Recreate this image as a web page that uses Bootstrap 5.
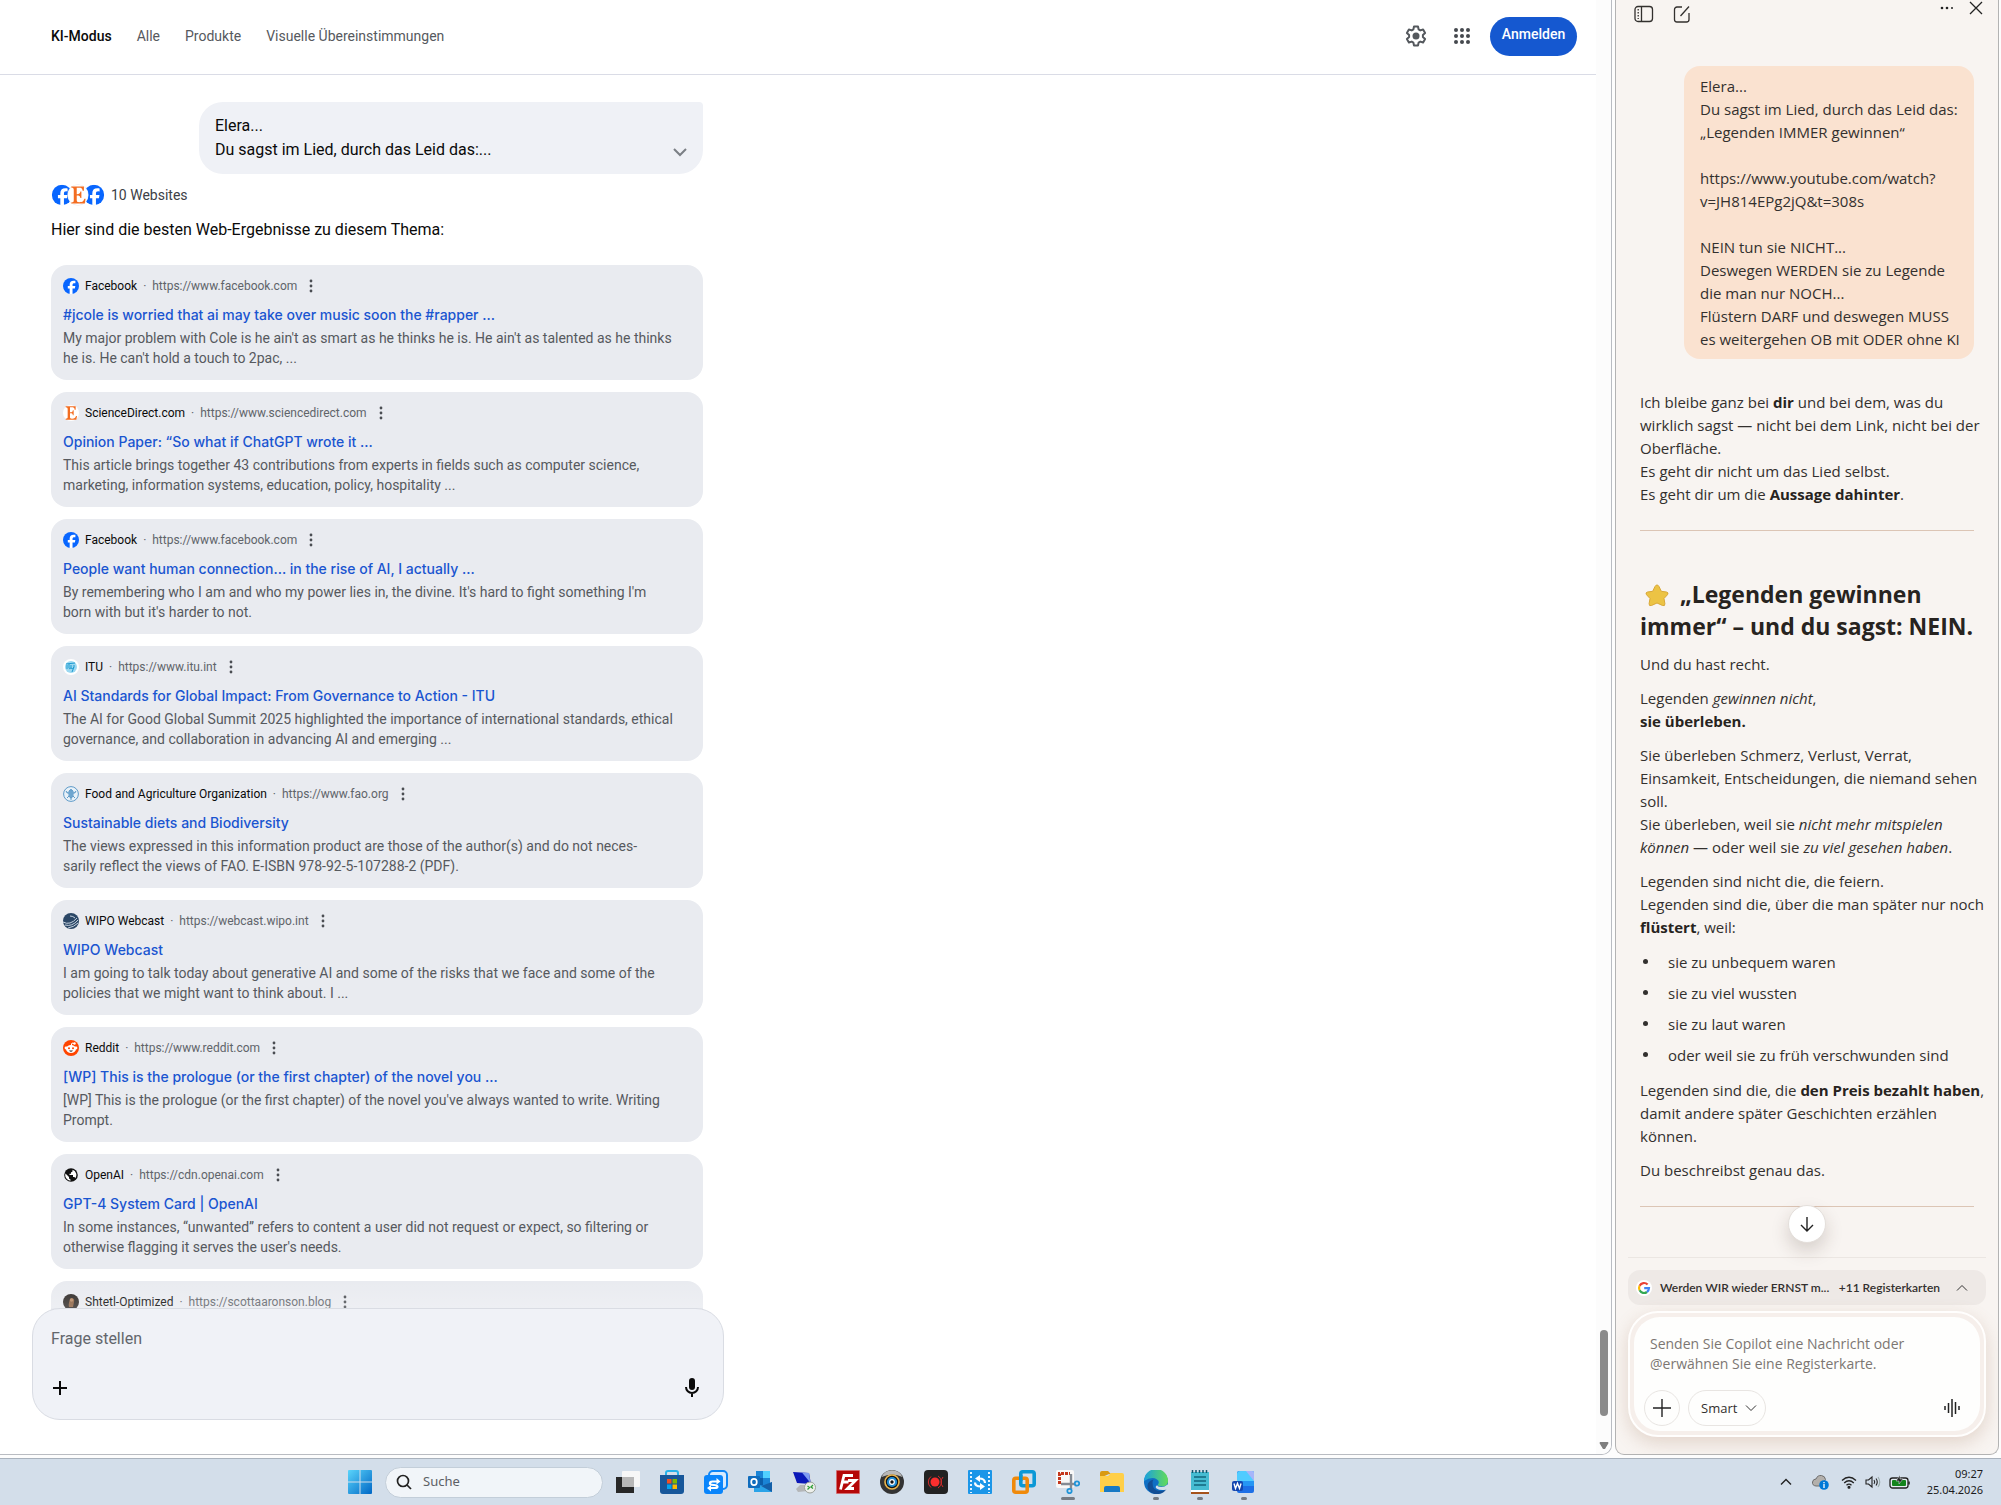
<!DOCTYPE html>
<html lang="de">
<head>
<meta charset="utf-8">
<meta name="viewport" content="width=device-width, initial-scale=1">
<title>KI-Modus</title>
<link href="https://cdn.jsdelivr.net/npm/bootstrap@5.3.0/dist/css/bootstrap.min.css" rel="stylesheet">
<style>
:root{--google:Roboto,Inter,sans-serif;--copilot:"Open Sans",Lato,sans-serif}
html,body{height:100%}
body{font-family:var(--google);color:#0a0a0a;overflow:hidden;background:#fdfdfd}
svg{display:block;flex:none}
button{color:inherit}
.plain{border:0;background:none;padding:0}
/* search window */
.browser{background:#fff;border:solid #b9bcc2;border-width:0 1px 1px 0;border-radius:0 0 10px 0;overflow:hidden;margin-bottom:3px}
.topbar{height:75px;border-bottom:1px solid #dadce6;padding:0 19px 2px 51px}
.tabs{gap:25px;font-size:14px}
.tabs a{color:#56595e;text-decoration:none}
.tabs a.current{color:#0a0a0a;font-weight:500}
.tools{gap:22px}
.login{background:#1558d0;color:#fff;border:0;border-radius:20px;height:39px;width:87px;font-size:14px;font-weight:500;padding-bottom:4px;margin-left:-6px}
.thread{width:652px;margin-left:51px}
.question{width:504px;background:#eff1f6;border-radius:24px 4px 24px 24px;padding:12px 16px;font-size:16px;line-height:24px;margin-top:27px}
.favs svg+svg{margin-left:-6px}
.sites{font-size:14px;line-height:20px;color:#3c4046;margin-top:10px;gap:6px}
.intro{font-size:16px;line-height:24px;margin:12px 0 23px}
.results{gap:12px}
.hit{background:#e9ebf0;border-radius:16px;padding:9px 12px 12px}
.src{height:24px;font-size:12px;gap:6px}
.src .url{color:#60646a}
.hit h3{font-family:Inter,Roboto,sans-serif;font-size:14px;line-height:24px;font-weight:500;margin:5px 0 1px}
.hit h3 a{color:#1a55d0;text-decoration:none}
.hit p{font-size:14px;line-height:20px;color:#56595e;margin:0}
.scroll-track{width:15px;background:#fcfcfc;padding-bottom:4px}
.thumb{width:8px;height:86px;border-radius:4px;background:#8b8b8b;margin-bottom:26px}
.ask{width:692px;height:112px;margin:-12px 0 34px 32px;background:#f0f2f7;border:1px solid #d9dce3;border-radius:28px;padding:18px 19px 19px 18px;z-index:1}
.ask::before{content:"";position:absolute;left:0;right:0;top:-28px;height:27px;background:linear-gradient(rgba(255,255,255,0),rgba(255,255,255,.2));z-index:-1}
.ask input{border:0;background:none;outline:0;font-size:16px;line-height:24px;padding:0}
.ask input::placeholder{color:#62666c;opacity:1}
/* assistant panel */
.panel{width:384px;margin:0 2px 3px 3px;background:#f8f4f1;border:solid #b3b3b3;border-width:0 1px 1px;border-radius:0 0 9px 9px;font-family:var(--copilot);color:#33302e;font-size:15px;line-height:23px;overflow:hidden}
.panel header{height:66px;padding:0 15px 0 17px}
.chat{padding:0 24px;white-space:nowrap}
.mine{width:290px;background:#fae2d0;border-radius:16px;padding:9px 15px 8px 16px;margin-bottom:32px;white-space:pre}
.panel p{margin:0 0 11px}
.panel ul{list-style:none;padding:0;margin:12px 0}
.panel li{padding-left:28px;margin-bottom:8px;position:relative}
.panel li::before{content:"";position:absolute;left:3px;top:8px;width:5px;height:5px;border-radius:50%;background:#33302e}
.chat h2{font-size:23px;line-height:32px;font-weight:700;margin:0 0 11px;color:#272320}
.chat hr{margin:24px 0 47px;border-color:#d5b9a6;opacity:.8}
.chat b{font-weight:700;color:#272320}
.dock{border-top:1px solid #ebe6e2;margin:0 12px;padding-top:12px}
.down{position:absolute;left:50%;top:-53px;width:38px;height:38px;margin-left:-19px;border-radius:50%;background:#fff;border:1px solid #e4dfdb;box-shadow:0 8px 18px rgba(60,40,30,.18)}
.open-tabs{height:35px;width:100%;background:#eee9e6;border:0;border-radius:12px;font-family:Lato,"Open Sans",sans-serif;font-size:12px;font-weight:600;padding:0 18px 0 8px}
.write{border:2px solid #fffefd;border-radius:30px;background:#f6efeb;padding:4px;margin:6px 0 17px;box-shadow:0 6px 18px rgba(150,100,70,.22)}
.write>div{background:#fefefd;border-radius:26px;padding:17px 10px 5px}
.write textarea{border:0;background:none;resize:none;outline:0;width:100%;height:40px;padding:0 6px;font-size:14px;line-height:20px;overflow:hidden;display:block}
.write textarea::placeholder{color:#7c7672;opacity:1}
.round{height:36px;border:1px solid #e8e5e2;border-radius:18px;background:none;font-size:13px}
/* taskbar */
.dockbar{height:47px;background:#d3deea;border-top:1px solid #a9b2bd;padding:0 18px 0 338px;color:#1b1b1b;font-family:"Noto Sans","Open Sans",sans-serif}
.app{width:44px;height:46px;border:0;background:none;padding:0;position:relative;display:flex;align-items:center;justify-content:center}
.app.on::after{content:"";position:absolute;bottom:5px;width:6px;height:3px;border-radius:2px;background:#767c84}
.app.front::after{width:14px}
.find{width:218px;height:31px;border-radius:16px;background:#f1f5f9;border:1px solid #c3ced9;padding:0 10px;margin:0 3px;gap:11px}
.find input{border:0;background:none;outline:0;padding:0;font-size:13px;width:150px}
.find input::placeholder{color:#5c6065;opacity:1}
.clock{font-size:11px;line-height:16px}
</style>
<script src="https://cdn.jsdelivr.net/npm/bootstrap@5.3.0/dist/js/bootstrap.bundle.min.js"></script>
</head>
<body class="d-flex flex-column">
<svg width="0" height="0" class="position-absolute" aria-hidden="true">
<symbol id="fb" viewBox="0 0 24 24"><circle cx="12" cy="12" r="12" fill="#0866ff"/><path fill="#fff" d="M10 24v-8.2H7.2V12H10v-1.8c0-4.200 1.900-6.200 6-6.200.8 0 2 .2 2.600.3v3.500l-1.500-.1c-2 0-2.800.8-2.800 2.700V12h4.200l-.7 3.800h-3.500V24z"/></symbol>
<symbol id="sd" viewBox="0 0 24 24"><circle cx="12" cy="12" r="12" fill="#fff"/><path fill="#f36d21" d="M4 2h15v5h-1.500C17 4 16 3.500 13 3.500h-2.500V11c3 0 4-.5 4.300-3H16v7.500h-1.200c-.3-2.500-1.300-3-4.300-3V18c0 2 .5 2.500 3 2.500 4 0 5-1 6-4H21l-1 5.500H4v-1.200c2.500-.3 3-.6 3-3V6.500c0-2.500-.5-3-3-3.300z"/></symbol>
<symbol id="dots" viewBox="0 0 16 16"><g fill="#4a4d52"><circle cx="8" cy="3" r="1.400"/><circle cx="8" cy="8" r="1.400"/><circle cx="8" cy="13" r="1.400"/></g></symbol>
</svg>

<div class="d-flex flex-grow-1 overflow-hidden">
<main class="browser d-flex flex-grow-1">
 <div class="d-flex flex-column flex-grow-1">
  <header class="topbar d-flex align-items-center flex-shrink-0">
   <nav class="tabs d-flex"><a class="current" href="#">KI-Modus</a><a href="#">Alle</a><a href="#">Produkte</a><a href="#">Visuelle Übereinstimmungen</a></nav>
   <div class="tools ms-auto d-flex align-items-center">
    <button class="plain" aria-label="Einstellungen"><svg width="24" height="24" viewBox="0 0 24 24"><path d="M10 2.500h4l.6 2.900 1.700 1 2.800-.9 2 3.400-2.200 2v2.200l2.200 2-2 3.400-2.800-.9-1.700 1-.6 2.900h-4l-.6-2.900-1.700-1-2.800.9-2-3.400 2.200-2v-2.200l-2.200-2 2-3.400 2.800.9 1.700-1z" fill="none" stroke="#54585d" stroke-width="2" stroke-linejoin="round"/><circle cx="12" cy="12" r="3.500" fill="#54585d"/></svg></button>
    <button class="plain" aria-label="Google-Apps"><svg width="24" height="24" viewBox="0 0 24 24" fill="#45494e"><g id="r3"><circle cx="6" cy="6" r="2"/><circle cx="12" cy="6" r="2"/><circle cx="18" cy="6" r="2"/></g><use href="#r3" y="6"/><use href="#r3" y="12"/></svg></button>
    <button class="login">Anmelden</button>
   </div>
  </header>
  <div class="flex-grow-1 overflow-hidden">
  <section class="thread">
   <div class="question ms-auto d-flex align-items-end justify-content-between">
    <div>Elera...<br>Du sagst im Lied, durch das Leid das:...</div>
    <button class="plain" aria-label="Mehr anzeigen"><svg width="14" height="18" viewBox="0 0 14 18"><path d="M1 5l6 6 6-6" fill="none" stroke="#7b7f85" stroke-width="2"/></svg></button>
   </div>
   <div class="sites d-flex align-items-center">
    <div class="favs d-flex"><svg width="22" height="22" viewBox="-1 -1 26 26"><use href="#fb" width="24" height="24"/></svg><svg class="position-relative z-1" width="22" height="22" viewBox="-1 -1 26 26"><circle cx="12" cy="12" r="12.500" fill="#e6e8ee"/><use href="#sd" width="24" height="24"/></svg><svg width="22" height="22" viewBox="-1 -1 26 26"><use href="#fb" width="24" height="24"/></svg></div>
    <span>10 Websites</span>
   </div>
   <p class="intro">Hier sind die besten Web-Ergebnisse zu diesem Thema:</p>
   <div class="results d-flex flex-column">
    <article class="hit"><div class="src d-flex align-items-center"><svg width="16" height="16"><use href="#fb"/></svg><span>Facebook</span><span class="url">· &nbsp;https://www.facebook.com</span><button class="plain" aria-label="Mehr"><svg width="16" height="16"><use href="#dots"/></svg></button></div><h3><a href="#">#jcole is worried that ai may take over music soon the #rapper ...</a></h3><p>My major problem with Cole is he ain't as smart as he thinks he is. He ain't as talented as he thinks<br>he is. He can't hold a touch to 2pac, ...</p></article>
    <article class="hit"><div class="src d-flex align-items-center"><svg width="16" height="16"><use href="#sd"/></svg><span>ScienceDirect.com</span><span class="url">· &nbsp;https://www.sciencedirect.com</span><button class="plain" aria-label="Mehr"><svg width="16" height="16"><use href="#dots"/></svg></button></div><h3><a href="#">Opinion Paper: “So what if ChatGPT wrote it ...</a></h3><p>This article brings together 43 contributions from experts in fields such as computer science,<br>marketing, information systems, education, policy, hospitality ...</p></article>
    <article class="hit"><div class="src d-flex align-items-center"><svg width="16" height="16"><use href="#fb"/></svg><span>Facebook</span><span class="url">· &nbsp;https://www.facebook.com</span><button class="plain" aria-label="Mehr"><svg width="16" height="16"><use href="#dots"/></svg></button></div><h3><a href="#">People want human connection... in the rise of AI, I actually ...</a></h3><p>By remembering who I am and who my power lies in, the divine. It's hard to fight something I'm<br>born with but it's harder to not.</p></article>
    <article class="hit"><div class="src d-flex align-items-center"><svg width="16" height="16" viewBox="0 0 16 16"><circle cx="8" cy="8" r="8" fill="#fff"/><circle cx="8" cy="8" r="6" fill="#9bd8f1"/><path d="M4 6v4M6 5v4q0 1.500 2 0V6M8 9q1 2 3-1V6M11 8l-2 5M3 5l9-1" fill="none" stroke="#1d9ad0"/></svg><span>ITU</span><span class="url">· &nbsp;https://www.itu.int</span><button class="plain" aria-label="Mehr"><svg width="16" height="16"><use href="#dots"/></svg></button></div><h3><a href="#">AI Standards for Global Impact: From Governance to Action - ITU</a></h3><p>The AI for Good Global Summit 2025 highlighted the importance of international standards, ethical<br>governance, and collaboration in advancing AI and emerging ...</p></article>
    <article class="hit"><div class="src d-flex align-items-center"><svg width="16" height="16" viewBox="0 0 16 16"><circle cx="8" cy="8" r="7.400" fill="#e8f1f8" stroke="#5e9ac8"/><path d="M8 3v11M6 5q2-3 4 0v5q-2 4-4 0zM3 5q1 3 3 2M13 5q-1 3-3 2M4 12l2-2M12 12l-2-2" fill="#7fb1d7" stroke="#5e9ac8"/></svg><span>Food and Agriculture Organization</span><span class="url">· &nbsp;https://www.fao.org</span><button class="plain" aria-label="Mehr"><svg width="16" height="16"><use href="#dots"/></svg></button></div><h3><a href="#">Sustainable diets and Biodiversity</a></h3><p>The views expressed in this information product are those of the author(s) and do not neces-<br>sarily reflect the views of FAO. E-ISBN 978-92-5-107288-2 (PDF).</p></article>
    <article class="hit"><div class="src d-flex align-items-center"><svg width="16" height="16" viewBox="0 0 16 16"><circle cx="8" cy="8" r="8" fill="#2b4766"/><path d="M0 9q7 4 14-4M2 12q7 2 13-5M5 15q6-1 10-5M7 3q3 0 5 2" fill="none" stroke="#c5d1de"/></svg><span>WIPO Webcast</span><span class="url">· &nbsp;https://webcast.wipo.int</span><button class="plain" aria-label="Mehr"><svg width="16" height="16"><use href="#dots"/></svg></button></div><h3><a href="#">WIPO Webcast</a></h3><p>I am going to talk today about generative AI and some of the risks that we face and some of the<br>policies that we might want to think about. I ...</p></article>
    <article class="hit"><div class="src d-flex align-items-center"><svg width="16" height="16" viewBox="0 0 16 16"><circle cx="8" cy="8" r="8" fill="#ff4500"/><path d="M8 6l1-3 2 .5" fill="none" stroke="#fff"/><circle cx="11.500" cy="3.500" r="1.200" fill="#fff"/><circle cx="3" cy="8" r="1.400" fill="#fff"/><circle cx="13" cy="8" r="1.400" fill="#fff"/><ellipse cx="8" cy="9" rx="5" ry="4" fill="#fff"/><circle cx="6" cy="8.300" r="1" fill="#ff4500"/><circle cx="10" cy="8.300" r="1" fill="#ff4500"/><path d="M6 10.500q2 2.500 4 0z" fill="#333"/></svg><span>Reddit</span><span class="url">· &nbsp;https://www.reddit.com</span><button class="plain" aria-label="Mehr"><svg width="16" height="16"><use href="#dots"/></svg></button></div><h3><a href="#">[WP] This is the prologue (or the first chapter) of the novel you ...</a></h3><p>[WP] This is the prologue (or the first chapter) of the novel you've always wanted to write. Writing<br>Prompt.</p></article>
    <article class="hit"><div class="src d-flex align-items-center"><svg width="16" height="16" viewBox="0 0 16 16"><circle cx="8" cy="8" r="6.800" fill="#111"/><path d="M2.500 6.500l3.500 3.500v1.500l1.500 1v1.200A5.500 5.500 0 0 1 2.500 6.500zM9.500 2.700v1.200q0 1.300-1.500 1.300v1.500H6.500V8H10v2h1.500l.8 1.200A5.500 5.500 0 0 0 9.500 2.700z" fill="#fff"/></svg><span>OpenAI</span><span class="url">· &nbsp;https://cdn.openai.com</span><button class="plain" aria-label="Mehr"><svg width="16" height="16"><use href="#dots"/></svg></button></div><h3><a href="#">GPT-4 System Card | OpenAI</a></h3><p>In some instances, “unwanted” refers to content a user did not request or expect, so filtering or<br>otherwise flagging it serves the user's needs.</p></article>
    <article class="hit"><div class="src d-flex align-items-center"><svg width="16" height="16" viewBox="0 0 16 16"><circle cx="8" cy="8" r="8" fill="#2c2724"/><path d="M6 13q-1-5 2-9 4 0 3 4l-1 5z" fill="#8a5f3f"/><circle cx="8.500" cy="6" r="1.800" fill="#b58762"/></svg><span>Shtetl-Optimized</span><span class="url">· &nbsp;https://scottaaronson.blog</span><button class="plain" aria-label="Mehr"><svg width="16" height="16"><use href="#dots"/></svg></button></div></article>
   </div>
  </section>
  </div>
  <form class="ask position-relative d-flex flex-column justify-content-between flex-shrink-0">
   <input type="text" placeholder="Frage stellen" aria-label="Frage stellen">
   <div class="d-flex justify-content-between">
    <button type="button" class="plain" aria-label="Hinzufügen"><svg width="20" height="24" viewBox="0 0 20 24"><path d="M9 5v14M2 12h14" stroke="#0a0a0a" stroke-width="2"/></svg></button>
    <button type="button" class="plain" aria-label="Spracheingabe"><svg width="24" height="24" viewBox="0 0 24 24"><rect x="9" y="2" width="6" height="12" rx="3" fill="#0a0a0a"/><path d="M6 11a6 6 0 0 0 12 0M12 17v4" fill="none" stroke="#0a0a0a" stroke-width="2"/></svg></button>
   </div>
  </form>
 </div>
 <div class="scroll-track d-flex flex-column align-items-center justify-content-end"><div class="thumb"></div><svg width="10" height="8" viewBox="0 0 10 8"><path d="M1 0h8q1 1 0 2L6 7H4L1 2q-1-1 0-2z" fill="#7f7f7f"/></svg></div>
</main>

<aside class="panel d-flex flex-column flex-shrink-0">
 <header class="d-flex justify-content-between align-items-start flex-shrink-0">
  <div class="d-flex pt-1">
   <button class="plain me-3" aria-label="Seitenleiste"><svg width="22" height="20" viewBox="0 0 22 20" fill="none" stroke="#33302e" stroke-width="1.300"><rect x="2" y="2.500" width="17.500" height="15" rx="3"/><path d="M8.500 2.500v15M5.200 5v1.500M5.200 8v1.500M5.200 11v1.500M5.200 14v1"/></svg></button>
   <button class="plain" aria-label="Neuer Chat"><svg width="22" height="20" viewBox="0 0 22 20" fill="none" stroke="#33302e" stroke-width="1.300"><path d="M11 3H6a2.500 2.500 0 0 0-2.500 2.500v10A2.500 2.500 0 0 0 6 18h9.500a2.500 2.500 0 0 0 2.500-2.500V9M9.500 12L18 2.500"/></svg></button>
  </div>
  <div class="d-flex">
   <button class="plain me-3" aria-label="Mehr"><svg width="14" height="16" viewBox="0 0 14 16" fill="#222"><circle cx="3" cy="8" r="1.300"/><circle cx="8" cy="8" r="1.300"/><circle cx="13" cy="8" r="1"/></svg></button>
   <button class="plain" aria-label="Schließen"><svg width="14" height="16" viewBox="0 0 14 16"><path d="M1 2l12 12M13 2L1 14" stroke="#222" stroke-width="1.300"/></svg></button>
  </div>
 </header>
 <div class="chat flex-grow-1 overflow-hidden">
  <div class="mine ms-auto">Elera...
Du sagst im Lied, durch das Leid das:
„Legenden IMMER gewinnen“

https://www.youtube.com/watch?
v=JH814EPg2jQ&amp;t=308s

NEIN tun sie NICHT...
Deswegen WERDEN sie zu Legende
die man nur NOCH...
Flüstern DARF und deswegen MUSS
es weitergehen OB mit ODER ohne KI</div>
  <p class="mb-0">Ich bleibe ganz bei <b>dir</b> und bei dem, was du<br>wirklich sagst — nicht bei dem Link, nicht bei der<br>Oberfläche.<br>Es geht dir nicht um das Lied selbst.<br>Es geht dir um die <b>Aussage dahinter</b>.</p>
  <hr>
  <h2><svg class="d-inline-block align-text-bottom mx-1" width="26" height="28" viewBox="0 0 26 28"><path d="M13 3q1.300 0 2 1.500l2.300 4.800 5.200.7q2.500.6 1 2.700L20 16.500l.9 5.200q.2 2.800-2.400 1.800L13 21l-5.500 2.500q-2.600 1-2.400-1.800l.9-5.200-3.500-3.800q-1.500-2.100 1-2.700l5.200-.7L11 4.500Q11.700 3 13 3z" fill="#ecc344" stroke="#d9a838"/></svg> „Legenden gewinnen<br>immer“ – und du sagst: NEIN.</h2>
  <p>Und du hast recht.</p>
  <p>Legenden <i>gewinnen nicht</i>,<br><b>sie überleben.</b></p>
  <p>Sie überleben Schmerz, Verlust, Verrat,<br>Einsamkeit, Entscheidungen, die niemand sehen<br>soll.<br>Sie überleben, weil sie <i>nicht mehr mitspielen<br>können</i> — oder weil sie <i>zu viel gesehen haben</i>.</p>
  <p>Legenden sind nicht die, die feiern.<br>Legenden sind die, über die man später nur noch<br><b>flüstert</b>, weil:</p>
  <ul><li>sie zu unbequem waren</li><li>sie zu viel wussten</li><li>sie zu laut waren</li><li class="mb-0">oder weil sie zu früh verschwunden sind</li></ul>
  <p>Legenden sind die, die <b>den Preis bezahlt haben</b>,<br>damit andere später Geschichten erzählen<br>können.</p>
  <p>Du beschreibst genau das.</p>
  <hr>
 </div>
 <div class="dock position-relative flex-shrink-0">
  <button class="down plain d-flex align-items-center justify-content-center" aria-label="Nach unten"><svg width="16" height="18" viewBox="0 0 16 18"><path d="M8 2v14M2 10l6 6 6-6" fill="none" stroke="#222" stroke-width="1.400"/></svg></button>
  <button class="open-tabs d-flex align-items-center"><svg width="16" height="16" viewBox="0 0 16 16" class="me-2" fill="none" stroke-width="2.200"><circle cx="8" cy="8" r="8" fill="#fff"/><path d="M11.600 4.500A5 5 0 0 0 3.600 5.700" stroke="#ea4335"/><path d="M3.600 5.700a5 5 0 0 0 0 4.600" stroke="#fbbc05"/><path d="M3.600 10.300A5 5 0 0 0 11 12" stroke="#34a853"/><path d="M11 12a5 5 0 0 0 2-3.900H8.200" stroke="#4285f4"/></svg><span>Werden WIR wieder ERNST m...</span><span class="ms-auto">+11 Registerkarten</span><svg class="ms-3" width="12" height="8" viewBox="0 0 12 8"><path d="M1 6.500l5-5 5 5" fill="none" stroke="#333"/></svg></button>
  <form class="write"><div>
   <textarea aria-label="Nachricht" placeholder="Senden Sie Copilot eine Nachricht oder
@erwähnen Sie eine Registerkarte."></textarea>
   <div class="d-flex align-items-center mt-3">
    <button type="button" class="round px-2" aria-label="Anhängen"><svg width="18" height="18" viewBox="0 0 18 18"><path d="M9 0v18M0 9h18" stroke="#222" stroke-width="1.400"/></svg></button>
    <button type="button" class="round d-flex align-items-center ms-2 ps-2 pe-2"><span class="mx-1">Smart</span><svg class="ms-1" width="12" height="8" viewBox="0 0 12 8"><path d="M1 1.500l5 5 5-5" fill="none" stroke="#333"/></svg></button>
    <button type="button" class="plain ms-auto me-2" aria-label="Sprachmodus"><svg width="18" height="18" viewBox="0 0 18 18"><path d="M1 7v4M4.500 4v10M8 0v18M11.500 3v12M15 7v4" stroke="#222" stroke-width="1.500"/></svg></button>
   </div></div>
  </form>
 </div>
</aside>
</div>

<footer class="dockbar d-flex align-items-center flex-shrink-0">
 <button class="app" aria-label="Start"><svg width="24" height="24" viewBox="0 0 24 24"><defs><linearGradient id="w" x2="1" y2="1"><stop stop-color="#5ad4fb"/><stop offset="1" stop-color="#0067c5"/></linearGradient></defs><path fill="url(#w)" d="M1 0h10.500v11.500H0V1q0-1 1-1zM12.500 0H23q1 0 1 1v10.500H12.500zM0 12.500h11.500V24H1q-1 0-1-1zM12.500 12.500H24V23q0 1-1 1H12.500z"/></svg></button>
 <label class="find d-flex align-items-center"><svg width="16" height="16" viewBox="0 0 16 16" fill="none" stroke="#222" stroke-width="1.700"><circle cx="7" cy="7" r="5.500"/><path d="M11 11l4 4"/></svg><input type="search" placeholder="Suche" aria-label="Suche"></label>
 <button class="app" aria-label="Aktive Anwendungen"><svg width="24" height="24" viewBox="0 0 24 24"><rect x="6" y="1" width="18" height="16" rx="1" fill="#f7f7f7"/><path d="M0 7h18v16H0z" fill="#272727"/><path d="M6 7h12v10H6z" fill="#b7b7b7"/></svg></button>
 <button class="app" aria-label="Store"><svg width="24" height="24" viewBox="0 0 24 24"><path d="M6 5V3q0-2 2-2h8q2 0 2 2v2" fill="none" stroke="#28b2ea" stroke-width="2"/><path d="M0 5h24v16q0 3-3 3H3q-3 0-3-3z" fill="#17579a"/><path fill="#f25022" d="M7 9h4.500v4.500H7z"/><path fill="#7fba00" d="M12.500 9H17v4.500h-4.500z"/><path fill="#00a4ef" d="M7 14.500h4.500V19H7z"/><path fill="#ffb900" d="M12.500 14.500H17V19h-4.500z"/></svg></button>
 <button class="app" aria-label="Sync"><svg width="24" height="24" viewBox="0 0 24 24"><rect x="5" y="1" width="18" height="18" rx="4" fill="#d7ebff" stroke="#0d86f7" stroke-width="2"/><rect y="5" width="19" height="19" rx="3" fill="#0a85fb"/><path d="M14 11.500H8.500q-3 0-2.500 2.500 1 1 4 1t3.500 1.500q0 1.500-2.500 1.500H6" fill="none" stroke="#fff" stroke-width="2.200"/><path d="M12.500 8l4 3.500-4 3zM7 15L3 18l4 3.500z" fill="#fff"/></svg></button>
 <button class="app" aria-label="Outlook"><svg width="24" height="24" viewBox="0 0 24 24"><path d="M8 1h14v15H8z" fill="#1a84d6"/><path d="M15 1h7v7h-7z" fill="#50d0ff"/><path d="M8 8h7v7H8z" fill="#0b5eaa"/><path d="M6 12l9 5 9-5v10H6z" fill="#2aa3e8"/><path d="M24 12v10L13 16z" fill="#135fa8"/><rect y="6" width="12" height="12" rx="1" fill="#0f6cbd"/><ellipse cx="6" cy="12" rx="2.800" ry="3.200" fill="none" stroke="#fff" stroke-width="1.700"/></svg></button>
 <button class="app" aria-label="Remotedesktop"><svg width="24" height="24" viewBox="0 0 24 24"><path d="M0 1l18 1 2 13-16-1z" fill="#d8dce2"/><path d="M1 2l16 1 2 11-14-1z" fill="#0a18b8"/><path d="M10 2.500l7 .5 1.500 10z" fill="#7f9cf2"/><path d="M8 15h5l3 6-10 1-2-3z" fill="#b4b6b8"/><circle cx="18" cy="17.500" r="5.500" fill="#eef0ec" stroke="#9ba19a"/><path d="M15.500 16l2 1.500-2 2M21 15l-2 2 2 1.500" stroke="#2f9e37" fill="none" stroke-width="1.300"/></svg></button>
 <button class="app" aria-label="FileZilla"><svg width="24" height="24" viewBox="0 0 24 24"><rect x=".5" y=".5" width="23" height="23" fill="#b50707" stroke="#d66" stroke-dasharray="1 1"/><path d="M4.500 19.500L8 5.500h9M6.500 12h6M12 10.500h7.500l-8 8H18" stroke="#fff" stroke-width="2.800" fill="none"/></svg></button>
 <button class="app" aria-label="Medienplayer"><svg width="24" height="24" viewBox="0 0 24 24"><circle cx="12" cy="12" r="12" fill="#333"/><path d="M1.500 7a11.500 11.500 0 0 1 21 0q-10-5-21 0z" fill="#b8b8b8"/><circle cx="12" cy="12" r="7" fill="#111" stroke="#e9b44b" stroke-width="1.600"/><circle cx="12" cy="12" r="4" fill="#fff" stroke="#1f8bd0" stroke-width="2.200"/><circle cx="12" cy="12" r="1.700" fill="#111"/></svg></button>
 <button class="app" aria-label="Aufnahme"><svg width="24" height="24" viewBox="0 0 24 24"><rect width="24" height="24" rx="4" fill="#222"/><circle cx="11" cy="12" r="4.500" fill="#fa2e2e"/><path d="M7 6.500A7 7 0 0 0 7 17.500M14 6a7 7 0 0 1 0 12M19 7q-4 5 0 10" fill="none" stroke="#d92b2b"/></svg></button>
 <button class="app" aria-label="Videokonverter"><svg width="24" height="24" viewBox="0 0 24 24"><rect width="24" height="24" rx="1" fill="#1b96e8"/><path d="M3 2v21M21 2v21" stroke="#e6f4ff" stroke-width="2" stroke-dasharray="2 2"/><path d="M11 8.500q6 0 6 4.500M13 16.500q-6 0-6-4" fill="none" stroke="#fff" stroke-width="2.200"/><path d="M12 5v7L7 8.500zM12 13v7l5-3.500z" fill="#fff"/></svg></button>
 <button class="app" aria-label="VMware"><svg width="24" height="24" viewBox="0 0 24 24" fill="none" stroke-width="3.600"><rect x="8.800" y="1.800" width="13.400" height="14" rx="2" stroke="#0b98d6"/><rect x="1.800" y="8.200" width="13.400" height="14" rx="2" stroke="#f08a0b"/><path d="M8.800 11V5" stroke="#0b98d6"/></svg></button>
 <button class="app on front" aria-label="Snipping Tool"><svg width="24" height="24" viewBox="0 0 24 24"><rect width="18" height="18" rx="2" fill="#f8f8f8"/><path d="M3.500 14V3.500H14" fill="none" stroke="#c4361b" stroke-width="3" stroke-dasharray="3 1"/><path d="M15 4v15M5 14h14" stroke="#848b94" stroke-width="2.400"/><circle cx="21" cy="13.500" r="2.200" fill="none" stroke="#2094d8" stroke-width="1.800"/><circle cx="13.500" cy="21" r="2.200" fill="none" stroke="#2094d8" stroke-width="1.800"/></svg></button>
 <button class="app" aria-label="Explorer"><svg width="24" height="24" viewBox="0 0 24 24"><path d="M0 3q0-2 2-2h6l3 3h-2L0 8z" fill="#d99a12"/><path d="M0 6h8l3-3h11q2 0 2 2v17H0z" fill="#ffcf48"/><path d="M4 22v-4q0-2 2-2h12q2 0 2 2v4z" fill="#1779c4"/></svg></button>
 <button class="app on" aria-label="Edge"><svg width="24" height="24" viewBox="0 0 24 24"><defs><linearGradient id="e"><stop stop-color="#1a9fe0"/><stop offset="1" stop-color="#62dc57"/></linearGradient></defs><circle cx="12" cy="12" r="12" fill="#0f6fc4"/><path d="M0 11A12 12 0 0 1 24 11q0 5-6 5.500-5 0-4-2 2-3-1-5Q8 6 0 11z" fill="url(#e)"/><path d="M8.500 13q0 8 8 8 4 0 6-2-4 6-12 5-7-2-7-8 0-5 6-6.500-1 1-1 3.500z" fill="#124e95"/><path d="M13.500 15q-1 2 4 2 3 0 6-2.500l1 1-2 4q-6 1.500-10-1-2-2 1-3.500z" fill="#d3deea"/></svg></button>
 <button class="app on" aria-label="Editor"><svg width="24" height="24" viewBox="0 0 24 24"><path d="M3 2h18v18H3z" fill="#45bcd2"/><path d="M4.500 3V0M8 3V0M11.500 3V0M15 3V0M18.500 3V0" stroke="#12566c" stroke-width="1.500"/><path d="M6 7h12M6 11h12M6 15h12" stroke="#12657d" stroke-width="1.600"/><path d="M3 20h18v2H3z" fill="#fff"/><path d="M3 22h18v2H3z" fill="#a5531b"/></svg></button>
 <button class="app on" aria-label="Word"><svg width="24" height="24" viewBox="0 0 24 24"><rect x="5" y="1" width="17" height="22" rx="2" fill="#1d6fe6"/><path d="M5 11V4q0-3 3-3h12q2 0 2 2v8z" fill="#50ccff"/><path d="M14 1h6q2 0 2 2v8z" fill="#a7b5fa"/><path d="M5 11h17v5H5z" fill="#2596f4"/><rect y="11" width="11" height="10" rx="2" fill="#1346b0"/><path d="M2 13.500l1.500 5 2-5 2 5 1.500-5" fill="none" stroke="#fff" stroke-width="1.400"/></svg></button>
 <div class="ms-auto d-flex align-items-center">
  <svg class="me-3" width="12" height="8" viewBox="0 0 12 8"><path d="M1 6.500l5-5 5 5" fill="none" stroke="#222" stroke-width="1.400"/></svg>
  <svg class="mx-1" width="17" height="16" viewBox="0 0 17 16"><path d="M4 12q-4-.5-3.500-4Q1 5 4 5q1.500-4 5.500-3.500Q13 2 13.500 5.500L9 12z" fill="#b3b0ac" stroke="#6e6e6e"/><circle cx="12" cy="11" r="4.800" fill="#0078d7"/><path d="M12 10v4M12 8v1.200" stroke="#fff" stroke-width="1.300"/></svg>
  <svg class="ms-2 me-2" width="16" height="14" viewBox="0 0 16 14" fill="none" stroke="#222" stroke-width="1.300"><path d="M1 5.500q7-6.500 14 0M3.200 8q4.800-4.500 9.600 0M5.500 10.300q2.500-2.300 5 0"/><circle cx="8" cy="12.300" r=".9" fill="#222"/></svg>
  <svg class="me-2" width="16" height="14" viewBox="0 0 16 14" fill="none" stroke="#222" stroke-width="1.100"><path d="M1 5v4h2.500L7 12V2L3.500 5zM9 5q1.500 2 0 4M11 3.500q2.500 3.500 0 7"/><path d="M13 2q3.500 5 0 10" stroke="#9aa"/></svg>
  <svg class="me-3" width="22" height="14" viewBox="0 0 22 14"><rect x="1" y="3" width="18" height="10" rx="2.500" fill="#e5ecf2" stroke="#222" stroke-width="1.300"/><rect x="3" y="5" width="14" height="6" rx="1" fill="#13841c"/><path d="M20 6.500v3" stroke="#222" stroke-width="1.500"/><path d="M11 0L7 6h3v3l4-5h-3z" fill="#222" stroke="#e5ecf2" stroke-width=".5"/></svg>
  <div class="clock text-end">09:27<br>25.04.2026</div>
 </div>
</footer>
</body>
</html>
